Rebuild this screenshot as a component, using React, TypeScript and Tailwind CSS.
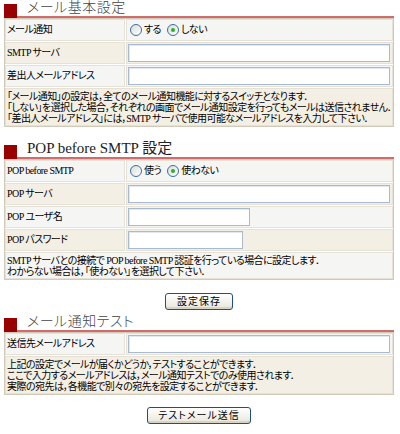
import React from "react";

const font = "font-['Liberation_Serif','Noto_Sans_CJK_JP',serif] [font-feature-settings:'palt']";
const light = "bg-[#f5f5f3]";
const beige = "bg-[#f3efe5]";

function Heading({ children, serif }: { children: React.ReactNode; serif?: boolean }) {
  return (
    <div className="flex items-end h-[16px]">
      <span className="w-[13px] h-[14px] bg-[#990000] shrink-0" />
      <div className="flex-1 h-[16px] border-b-2 border-[#cf6d6d] pl-[10px] flex items-end">
        <span
          className={
            serif
              ? "text-[15px] leading-[15px] text-[#222] tracking-[0px] mb-[1px]"
              : "text-[14px] leading-[14px] text-[#444] font-light tracking-[0.5px] mb-[1px]"
          }
        >
          {children}
        </span>
      </div>
    </div>
  );
}

function Input({ w }: { w?: string }) {
  return (
    <div
      className={`h-[18px] bg-white border border-[#a7bad0] shadow-[inset_1px_1px_0_#e3e9f0] ${w ?? "w-full"}`}
    />
  );
}

function Radio({ checked, label }: { checked?: boolean; label: string }) {
  return (
    <span className="flex items-center gap-[2px]">
      <span className="w-[12px] h-[12px] rounded-full border border-[#3a6ea5] bg-gradient-to-br from-[#dcdcd6] to-white flex items-center justify-center">
        {checked && <span className="w-[4px] h-[4px] rounded-full bg-[#2bb02b]" />}
      </span>
      <span>{label}</span>
    </span>
  );
}

function Row({
  label,
  bg,
  children,
}: {
  label: string;
  bg: string;
  children: React.ReactNode;
}) {
  return (
    <>
      <div className={`${bg} border border-[#e6e1d6] h-[22px] flex items-center pl-[1px]`}>{label}</div>
      <div className={`${bg} border border-[#e6e1d6] h-[22px] flex items-center pl-[1px] pr-[2px]`}>
        {children}
      </div>
    </>
  );
}

function Note({ bg, lines }: { bg: string; lines: string[] }) {
  return (
    <div className={`col-span-2 ${bg} border border-[#e6e1d6] px-[1px] pt-[2px] pb-[1px] leading-[11px] whitespace-nowrap`}>
      {lines.map((l, i) => (
        <div key={i} className="h-[11px]">{l}</div>
      ))}
    </div>
  );
}

function Panel({ children }: { children: React.ReactNode }) {
  return (
    <div className="border border-[#d2cab8] bg-white grid grid-cols-[120px_1fr] gap-px">
      {children}
    </div>
  );
}

function Button({ label, w }: { label: string; w: string }) {
  return (
    <div className="flex justify-center">
      <div
        className={`${w} h-[17px] rounded-[3px] border border-[#1d4f86] bg-gradient-to-b from-white to-[#e8e6dc] shadow-[inset_0_-2px_0_#d8d3c3] flex items-center justify-center tracking-[1px]`}
      >
        {label}
      </div>
    </div>
  );
}

export default function App() {
  return (
    <div className={`w-[400px] h-[434px] overflow-hidden bg-white pl-[4px] pr-[6px] pt-[2px] text-[10px] leading-[12px] tracking-[-0.55px] text-black ${font}`}>
      <Heading>メール基本設定</Heading>
      <Panel>
        <Row label="メール通知" bg={light}>
          <div className="flex items-center gap-[6px] pl-[2px]">
            <Radio label="する" />
            <Radio label="しない" checked />
          </div>
        </Row>
        <Row label="SMTP サーバ" bg={beige}>
          <Input />
        </Row>
        <Row label="差出人メールアドレス" bg={light}>
          <Input />
        </Row>
        <Note
          bg={beige}
          lines={[
            "「メール通知」の設定は，全てのメール通知機能に対するスイッチとなります．",
            "「しない」を選択した場合，それぞれの画面でメール通知設定を行ってもメールは送信されません．",
            "「差出人メールアドレス」には，SMTP サーバで使用可能なメールアドレスを入力して下さい．",
          ]}
        />
      </Panel>

      <div className="mt-[16px]">
        <Heading serif>POP before SMTP 設定</Heading>
      </div>
      <Panel>
        <Row label="POP before SMTP" bg={light}>
          <div className="flex items-center gap-[6px] pl-[2px]">
            <Radio label="使う" />
            <Radio label="使わない" checked />
          </div>
        </Row>
        <Row label="POP サーバ" bg={beige}>
          <Input />
        </Row>
        <Row label="POP ユーザ名" bg={light}>
          <Input w="w-[122px]" />
        </Row>
        <Row label="POP パスワード" bg={beige}>
          <Input w="w-[115px]" />
        </Row>
        <Note
          bg={light}
          lines={[
            "SMTP サーバとの接続で POP before SMTP 認証を行っている場合に設定します．",
            "わからない場合は，「使わない」を選択して下さい．",
          ]}
        />
      </Panel>

      <div className="mt-[13px]">
        <Button label="設定保存" w="w-[68px]" />
      </div>

      <div className="mt-[6px]">
        <Heading>メール通知テスト</Heading>
      </div>
      <Panel>
        <Row label="送信先メールアドレス" bg={light}>
          <Input />
        </Row>
        <Note
          bg={beige}
          lines={[
            "上記の設定でメールが届くかどうか，テストすることができます．",
            "ここで入力するメールアドレスは，メール通知テストでのみ使用されます．",
            "実際の宛先は，各機能で別々の宛先を設定することができます．",
          ]}
        />
      </Panel>

      <div className="mt-[12px]">
        <Button label="テストメール送信" w="w-[104px]" />
      </div>
    </div>
  );
}
